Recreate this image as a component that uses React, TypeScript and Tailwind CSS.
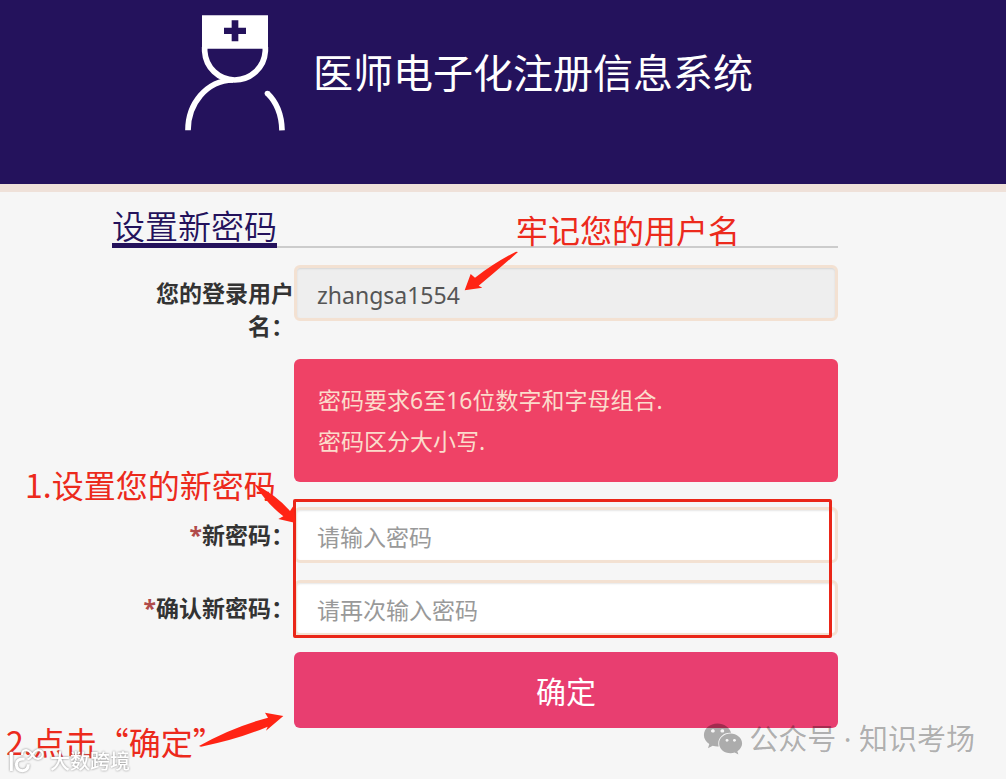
import React from 'react';
import { FaWeixin } from 'react-icons/fa';

const inputStyle =
    "block w-full h-14 px-5 pt-1 rounded-md border-[3px] border-[#f3e1d2] text-[23px] text-[#555] placeholder:text-[#999] shadow-[inset_0_1px_2px_rgba(0,0,0,0.1)] outline-none";

const labelStyle = "pt-3 text-right text-[23px] leading-[33px] font-bold text-[#333]";

function DoctorLogo() {
    return (
        <svg width="100" height="116" viewBox="46 44 300 348" fill="none" aria-hidden="true">
            <path d="M97 45H295V145H97Z" fill="#fff" />
            <path d="M105 140V152C108 202 147 238 195 239C244 238 284 202 287 152V140" stroke="#fff" strokeWidth="17" />
            <path d="M186 60H206V82H229V101H206V123H186V101H163V82H186Z" fill="#24125c" />
            <path d="M55 390C55 310 110 241 190 239" stroke="#fff" strokeWidth="17" />
            <path d="M293 279C320 305 336 345 337 390" stroke="#fff" strokeWidth="17" />
            <circle cx="293" cy="279" r="8" fill="#fff" />
        </svg>
    );
}

function PasswordRow({ id, label, placeholder }: { id: string; label: string; placeholder: string }) {
    return (
        <div className="grid grid-cols-[182px_1fr]">
            <label htmlFor={id} className={labelStyle}>
                <span className="text-[#b04a4a]">*</span>{label}
            </label>
            <input id={id} type="password" placeholder={placeholder} className={`${inputStyle} bg-white`} />
        </div>
    );
}

export default function App() {
    return (
        <div lang="zh-CN" className="relative min-h-screen overflow-hidden bg-[#f6f6f6] font-['Noto_Sans','Noto_Sans_CJK_SC',sans-serif]">
            <header className="flex h-48 items-start gap-7 border-b-8 border-[#efe1d9] bg-[#24125c] pt-[15px] pl-[185px]">
                <DoctorLogo />
                <h1 className="pt-7 text-[40px] leading-[60px] whitespace-nowrap text-white">医师电子化注册信息系统</h1>
            </header>

            <main className="pt-4 pr-42 pl-28">
                <div className="mb-[17px] flex border-b-2 border-[#ccc]">
                    <h2 className="-mb-0.5 border-b-[5px] border-[#24125c] font-['Noto_Sans_CJK_SC',sans-serif] text-[33px] leading-[35px] font-[350] text-[#24125c]">设置新密码</h2>
                </div>

                <form onSubmit={(e) => e.preventDefault()}>
                    <div className="mb-4 grid grid-cols-[182px_1fr]">
                        <label htmlFor="username" className={labelStyle}>您的登录用户名：</label>
                        <input id="username" type="text" readOnly value="zhangsa1554" className={`${inputStyle} bg-[#eee]`} />
                    </div>

                    <div className="mb-[25px] ml-[182px] rounded-md bg-[#ef4266] px-6 pt-[21px] pb-5 text-[23px] leading-[41px] text-[#fbdccb]">
                        <p>密码要求6至16位数字和字母组合.</p>
                        <p>密码区分大小写.</p>
                    </div>

                    <div className="relative mb-4 flex flex-col gap-[17px]">
                        <PasswordRow id="password" label="新密码：" placeholder="请输入密码" />
                        <PasswordRow id="confirm" label="确认新密码：" placeholder="请再次输入密码" />
                        <div className="pointer-events-none absolute -top-2 right-1.5 -bottom-0.5 left-[181px] rounded-xs border-[3px] border-[#ea2618]" />
                    </div>

                    <div className="pl-[182px]">
                        <button type="submit" className="h-19 w-full rounded-md bg-[#e83e70] pt-0.5 text-[30px] text-white">确定</button>
                    </div>
                </form>
            </main>

            {/* Step notes */}
            <div className="pointer-events-none font-['Noto_Sans_CJK_SC',sans-serif] text-[32px] leading-10 whitespace-nowrap text-[#ec2a1c]">
                <p className="absolute top-[209px] left-[516px]">牢记您的用户名</p>
                <svg className="absolute top-[250px] left-[464px]" width="55" height="41" viewBox="102 150 165 123" fill="#ff2414" aria-hidden="true">
                    <path d="M104 271L122 222L135 233Q195 187 258 155L264 156Q205 209 146 257L157 263Z" />
                </svg>

                <p className="absolute top-[464px] left-[25px]">1.设置您的新密码</p>
                <svg className="absolute top-[483px] left-[253px]" width="43" height="41" viewBox="759 69 129 123" fill="#ff2414" aria-hidden="true">
                    <path d="M762 71Q828 104 870 153L880 138L887 189L835 177L850 169Q802 132 762 71Z" />
                </svg>

                <p className="absolute top-[721px] left-[6px]">2.点击“确定”</p>
                <svg className="absolute top-[712px] left-[198px]" width="86" height="35" viewBox="594 36 258 105" fill="#ff2414" aria-hidden="true">
                    <path d="M597 138Q695 82 804 53L795 38L850 48L798 92L803 80Q712 119 603 140Z" />
                </svg>
            </div>

            {/* Watermarks */}
            <div className="pointer-events-none absolute bottom-1.5 left-2 flex items-end gap-1 font-['Noto_Sans_CJK_SC',sans-serif] text-[20px] leading-6 font-medium text-white [filter:drop-shadow(0_0_1px_#888)]">
                <svg width="38" height="26" viewBox="24 138 114 78" fill="none" stroke="#fff" strokeWidth="9" aria-hidden="true">
                    <path d="M34 160V210" />
                    <path d="M74 174Q50 172 49 190Q50 209 68 209Q85 208 85 190" />
                    <path d="M66 162Q66 147 78 147Q88 148 96 160Q104 174 114 174Q128 172 128 160Q127 148 114 147Q106 148 98 160Q92 173 82 175" strokeWidth="6" />
                    <circle cx="34" cy="158" r="6" fill="#fff" stroke="none" />
                </svg>
                <span>大数跨境</span>
            </div>
            <div className="pointer-events-none absolute right-[31px] bottom-5 flex items-center gap-1.5 text-[29px] leading-10 text-black/30">
                <FaWeixin className="size-10" aria-hidden="true" />
                <span className="whitespace-nowrap">公众号 · 知识考场</span>
            </div>
        </div>
    );
}
